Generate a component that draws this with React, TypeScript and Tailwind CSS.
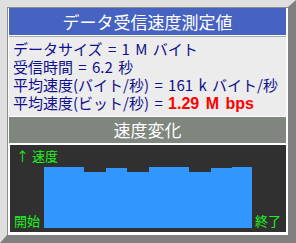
const bars = [
  { w: 'w-[40px]', h: 'h-[61px]' },
  { w: 'w-[22px]', h: 'h-[56px]' },
  { w: 'w-[21px]', h: 'h-[60px]' },
  { w: 'w-[22px]', h: 'h-[56px]' },
  { w: 'w-[40px]', h: 'h-[61px]' },
  { w: 'w-[22px]', h: 'h-[56px]' },
  { w: 'w-[21px]', h: 'h-[60px]' },
  { w: 'w-[20px]', h: 'h-[61px]' },
];

export default function App() {
  const jp = { fontFamily: '"Noto Sans CJK JP", "Liberation Sans", sans-serif' };

  return (
    <div className="w-[296px] h-[243px] bg-[#dfdfdf]" style={jp}>
      {/* mitred borders give the slanted shadow ends */}
      <div className="w-full h-full border-t-[7px] border-l-[7px] border-r-[8px] border-b-[8px] border-t-transparent border-l-transparent border-r-[#808080] border-b-[#808080]">
        <div className="h-full bg-white border-t border-l border-[#8c8c8c] pl-px pr-[2px] pb-[3px] flex flex-col">
          <div className="h-[27px] bg-[#4763c2] text-white text-[17px] leading-[27px] text-center">
            データ受信速度測定値
          </div>

          <div className="mt-px h-[80px] bg-[#ececec] border-t border-[#a8a8a8] pl-[4px] pt-[3px] text-[15px] leading-[18px] [word-spacing:2px] text-[#10108e] whitespace-nowrap">
            <div className="h-[18px]">データサイズ = 1 M バイト</div>
            <div className="h-[18px]">受信時間 = 6.2 秒</div>
            <div className="h-[18px]">平均速度(バイト/秒) = 161 k バイト/秒</div>
            <div className="h-[18px]">
              平均速度(ビット/秒) ={' '}
              <span className="text-[#ff0000] font-bold text-[16px]" style={{ fontFamily: '"Liberation Sans", sans-serif' }}>
                1.29 M bps
              </span>
            </div>
          </div>

          <div className="mt-px h-[26px] bg-[#7e867e] text-white text-[17px] leading-[26px] text-center">
            速度変化
          </div>

          <div className="mt-[2px] h-[87px] bg-[#303030] ml-px pl-[4px] pr-[5px] pt-[2px] pb-[4px] flex flex-col text-[#1cf51c] text-[13px]">
            <div className="h-[17px] leading-[17px] pl-[2px]">↑ 速度</div>
            <div className="flex-1 flex items-end">
              <span className="leading-[14px] w-[26px]">開始</span>
              <div className="ml-[4px] flex items-end">
                {bars.map((b, i) => (
                  <div key={i} className={`${b.w} ${b.h} bg-[#3196fe]`} />
                ))}
              </div>
              <span className="ml-auto leading-[14px]">終了</span>
            </div>
          </div>
        </div>
      </div>
    </div>
  );
}
